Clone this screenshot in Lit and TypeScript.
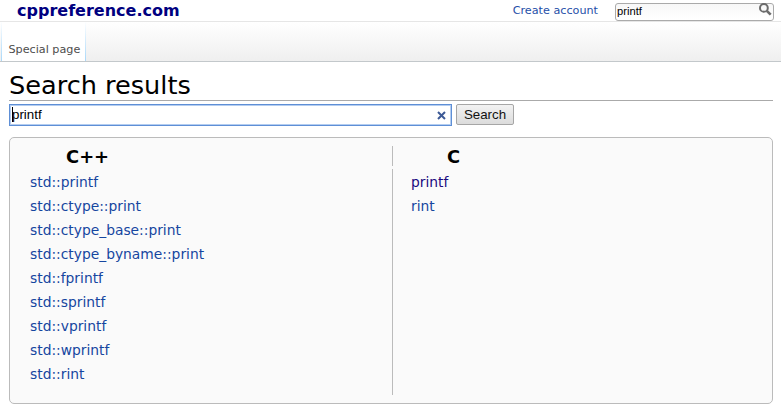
import { LitElement, html, css } from "lit";
import { customElement, property } from "lit/decorators.js";

interface ResultLink {
  label: string;
  visited?: boolean;
}

@customElement("result-column")
class ResultColumn extends LitElement {
  @property() heading = "";
  @property({ attribute: false }) links: ResultLink[] = [];

  static styles = css`
    :host { display: flex; flex-direction: column; gap: 3px; }
    h3 {
      margin: 0; height: 20px; padding-left: 56px;
      font-size: 17.9px; line-height: 22px; font-weight: bold; color: #000;
    }
    ul { flex: 1; margin: 0; padding: 1px 0 0 20px; list-style: none; font-size: 13.83px; line-height: 24px; }
    :host([divided]) h3, :host([divided]) ul { border-left: 1px solid #bbb; }
    :host([divided]) h3 { padding-left: 54px; }
    :host([divided]) ul { padding-left: 18px; }
    a { color: #1646a0; text-decoration: none; }
    .visited { color: #1a0a80; }
  `;

  render() {
    return html`
      <h3>${this.heading}</h3>
      <ul>
        ${this.links.map((l) => html`<li><a class=${l.visited ? "visited" : ""}>${l.label}</a></li>`)}
      </ul>
    `;
  }
}

@customElement("app-root")
class AppRoot extends LitElement {
  static styles = css`
    :host {
      display: block; height: 413px; overflow: hidden; background: #fff; color: #000;
      font-family: "DejaVu Sans", sans-serif; white-space: nowrap;
    }
    * { box-sizing: border-box; }
    .top { display: flex; height: 22px; border-bottom: 1px solid #e6e6e6; padding: 0 7px 0 17px; }
    .logo { flex: 1; font-size: 16px; line-height: 21px; font-weight: bold; color: #000080; }
    .account { font-size: 11.2px; line-height: 21px; color: #1f4fa8; margin-right: 17px; }
    .quick {
      display: flex; align-items: center; justify-content: space-between;
      width: 159px; height: 18px; margin-top: 3px; padding: 0 1px;
      border: 1px solid #aaa; border-radius: 3px;
      background: linear-gradient(#f7f7f7, #fff);
      font: 11.2px "Liberation Sans", sans-serif;
    }
    .quick span { margin-top: -2px; }
    .quick svg { display: block; margin-top: -5px; }
    .tabs {
      display: flex; height: 40px; padding-left: 1px;
      background: linear-gradient(#fff, #efefef); border-bottom: 1px solid #c3c8cb;
    }
    .tab {
      width: 85px; height: 39px; padding: 20px 0 0 6.5px;
      font-size: 11.2px; line-height: 15px; color: #4d4d4d; background: #fff;
      border: solid; border-width: 0 1px;
      border-image: linear-gradient(#fff, #a7d7f9) 1;
    }
    main { padding: 10px 8px 0 9px; }
    h1 {
      margin: 0; height: 29px; border-bottom: 1px solid #aaa;
      font-size: 25.6px; line-height: 27px; font-weight: normal;
    }
    .search { display: flex; gap: 4px; margin-top: 3px; font: 13.33px "Liberation Sans", sans-serif; }
    .field {
      display: flex; align-items: center; justify-content: space-between;
      width: 443px; height: 22px; padding: 0 5px 0 2px;
      border: 1px solid #5e8fd6; box-shadow: inset 0 0 0 1px #b4cdf0; background: #fff;
    }
    .value { display: flex; align-items: center; margin-top: -1px; }
    .caret { width: 1px; height: 15px; margin-right: -1px; background: #000; }
    .go {
      width: 58px; height: 21px; border: 1px solid #a6a6a6; border-radius: 2px; padding: 0;
      background: linear-gradient(#f2f2f2, #dcdcdc); color: #111; font: inherit; line-height: 19px;
    }
    .panel {
      display: grid; grid-template-columns: 382px 1fr; height: 267px; margin-top: 11px;
      padding: 8px 0; border: 1px solid #bbb; border-radius: 5px; background: #fafafa;
    }
  `;

  private cpp: ResultLink[] = [
    "std::printf", "std::ctype::print", "std::ctype_base::print", "std::ctype_byname::print",
    "std::fprintf", "std::sprintf", "std::vprintf", "std::wprintf", "std::rint",
  ].map((label) => ({ label }));

  private c: ResultLink[] = [{ label: "printf", visited: true }, { label: "rint" }];

  render() {
    return html`
      <header class="top">
        <div class="logo">cppreference.com</div>
        <div class="account">Create account</div>
        <div class="quick">
          <span>printf</span>
          <svg width="13" height="13" viewBox="0 0 13 13" fill="none" stroke="#6b6b6b">
            <circle cx="4.9" cy="4.9" r="3.9" stroke-width="2" />
            <path d="M7.8 7.8L11.7 11.7" stroke-width="2.6" />
          </svg>
        </div>
      </header>
      <nav class="tabs"><div class="tab">Special page</div></nav>
      <main>
        <h1>Search results</h1>
        <div class="search">
          <div class="field">
            <span class="value"><span class="caret"></span>printf</span>
            <svg width="9" height="9" viewBox="0 0 9 9" stroke="#3d5a96" stroke-width="2">
              <path d="M1 1L8 8M8 1L1 8" />
            </svg>
          </div>
          <button class="go">Search</button>
        </div>
        <section class="panel">
          <result-column heading="C++" .links=${this.cpp}></result-column>
          <result-column divided heading="C" .links=${this.c}></result-column>
        </section>
      </main>
    `;
  }
}
